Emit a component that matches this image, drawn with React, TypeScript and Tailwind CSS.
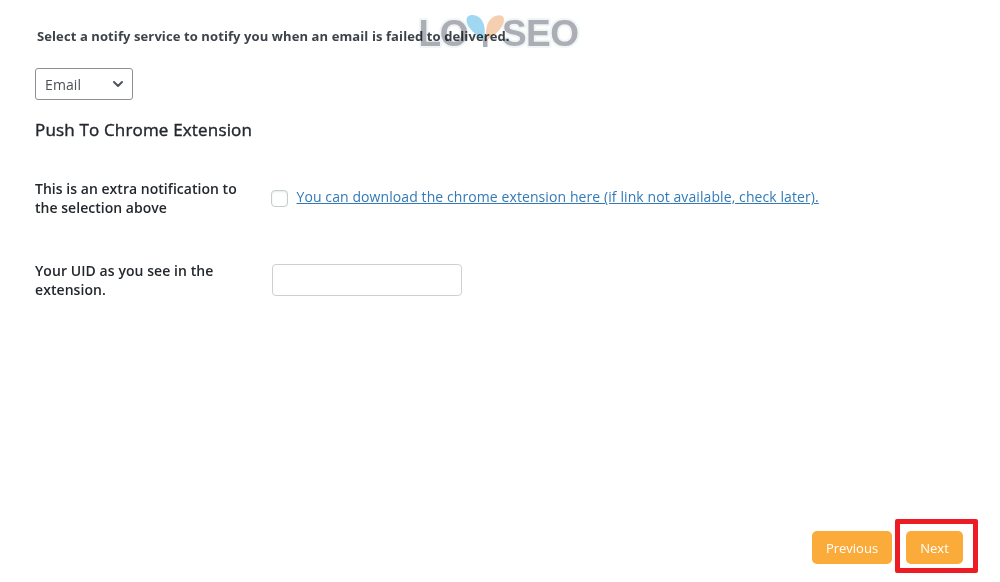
import { useState } from "react";
import { ChevronDown } from "lucide-react";

function Watermark() {
  return (
    <svg
      className="pointer-events-none absolute top-2.5 left-[416px] h-[44px] w-[168px] mix-blend-multiply"
      viewBox="0 0 168 44"
      aria-hidden="true"
    >
      <g
        fill="#adadb5"
        stroke="#eef7f6"
        strokeWidth="4"
        strokeLinejoin="round"
        paintOrder="stroke"
        className="font-['Liberation_Sans',sans-serif] text-[37px] font-bold"
      >
        <text x="2.5" y="36" textLength="50">LO</text>
        <text x="86" y="36" textLength="77">SEO</text>
      </g>
      <path d="M61 22L67 30V37H71.500V30L78 22L70 26Z" fill="#adadb5" />
      <path d="M68 30C61 26 50.500 18 50.500 10C50.500 4 59 3.500 64 8C69 13 69.500 21 68 30Z" fill="#9fd8f0" />
      <path d="M70.500 30C69 21 70.500 12 76 8C81 4 88 4.500 88 9.500C88 18 78 26 70.500 30Z" fill="#f6ceb0" />
    </svg>
  );
}

export default function App() {
  const [enabled, setEnabled] = useState(false);
  const [uid, setUid] = useState("");

  return (
    <main className="relative flex h-screen flex-col overflow-hidden bg-white pl-[35px] font-['Open_Sans','Noto_Sans',sans-serif] text-[#23282d]">
      <p className="mt-[26px] ml-[2px] text-[13px] leading-5 font-bold tracking-[0.1px] whitespace-nowrap text-[#3c434a]">
        Select a notify service to notify you when an email is failed to delivered.
      </p>
      <Watermark />

      <div className="relative mt-[22px] h-8 w-[98px]">
        <select className="h-8 w-full appearance-none rounded-[3px] border border-[#8c8f94] bg-white pl-[9px] text-[14px] tracking-[0.1px] text-[#4b5157]">
          <option>Email</option>
        </select>
        <ChevronDown className="pointer-events-none absolute top-2 right-[7px] h-4 w-4 text-[#50555a]" strokeWidth={3} />
      </div>

      <h2 className="mt-[18px] text-[17px] leading-6 tracking-[0.17px] [-webkit-text-stroke:0.4px_#23282d]">
        Push To Chrome Extension
      </h2>

      <div className="mt-[36px] flex h-[40px] items-center">
        <label htmlFor="push" className="w-[236px] text-[14px] leading-[19.5px] font-semibold tracking-[0.03px]">
          This is an extra notification to
          <br />
          the selection above
        </label>
        <input
          id="push"
          type="checkbox"
          checked={enabled}
          onChange={(e) => setEnabled(e.target.checked)}
          className="h-[17px] w-[17px] appearance-none rounded-[4px] border border-[#c9cccb] bg-white shadow-[inset_0_1px_2px_#dfeceb] checked:bg-[#337ab7]"
        />
        <a href="#" className="mb-[2px] ml-[8.5px] text-[14px] leading-5 tracking-[0.09px] whitespace-nowrap text-[#337ab7] underline">
          You can download the chrome extension here (if link not available, check later).
        </a>
      </div>

      <div className="mt-[42px] flex h-[40px] items-center">
        <label htmlFor="uid" className="w-[237px] text-[14px] leading-[19.5px] font-semibold tracking-[0.07px]">
          Your UID as you see in the
          <br />
          extension.
        </label>
        <input
          id="uid"
          value={uid}
          onChange={(e) => setUid(e.target.value)}
          className="mb-px h-8 w-[190px] rounded-[4px] border border-[#cfcfcf] px-2 text-[14px]"
        />
      </div>

      <div className="mt-auto mr-[22px] mb-[9px] flex items-center justify-end gap-[3px]">
        <button type="button" className="mt-[2px] h-[33px] w-20 rounded-[5px] bg-[#fbab3a] pt-[3px] text-[13px] text-white">
          Previous
        </button>
        <div className="flex h-[54px] w-[83px] items-center rounded-[2px] border-[5px] border-[#ed1c24] pl-[6px]">
          <button type="button" className="mt-[2px] h-[33px] w-[57px] rounded-[5px] bg-[#fbab3a] pt-[3px] text-[13px] text-white">
            Next
          </button>
        </div>
      </div>
    </main>
  );
}
